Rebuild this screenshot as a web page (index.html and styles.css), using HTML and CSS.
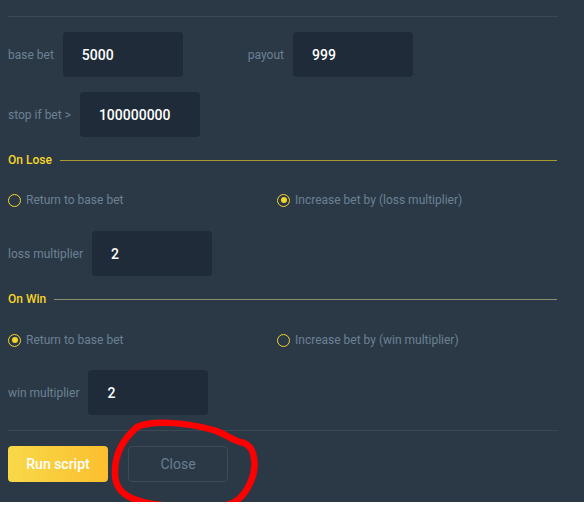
FILE: index.html
```html
<!DOCTYPE html>
<html lang="en">
<head>
    <meta charset="UTF-8">
    <meta name="viewport" content="width=device-width, initial-scale=1.0">
    <title>Auto Bet Script</title>
    <link rel="stylesheet" href="styles.css">
</head>
<body>
    <div class="panel">
        <div class="divider"></div>
        <div class="field-row first">
            <label class="field">
                <span class="field-label">base bet</span>
                <span class="field-input">5000</span>
            </label>
            <label class="field payout">
                <span class="field-label">payout</span>
                <span class="field-input">999</span>
            </label>
        </div>
        <div class="field-row">
            <label class="field">
                <span class="field-label">stop if bet &gt;</span>
                <span class="field-input">100000000</span>
            </label>
        </div>

        <div class="section-title lose"><span>On Lose</span></div>
        <div class="radio-row">
            <div class="radio"><span class="dot"></span>Return to base bet</div>
            <div class="radio"><span class="dot checked"></span>Increase bet by (loss multiplier)</div>
        </div>
        <div class="field-row mult">
            <label class="field">
                <span class="field-label">loss multiplier</span>
                <span class="field-input">2</span>
            </label>
        </div>

        <div class="section-title win"><span>On Win</span></div>
        <div class="radio-row">
            <div class="radio"><span class="dot checked"></span>Return to base bet</div>
            <div class="radio"><span class="dot"></span>Increase bet by (win multiplier)</div>
        </div>
        <div class="field-row mult">
            <label class="field">
                <span class="field-label">win multiplier</span>
                <span class="field-input">2</span>
            </label>
        </div>

        <div class="divider bottom"></div>
        <div class="actions">
            <button class="btn run">Run script</button>
            <button class="btn close">Close</button>
        </div>
    </div>

    <svg class="scribble" width="584" height="509" viewBox="0 0 584 509">
        <path d="M137 427 C150 421 182 421 213 430 C225 433 232 441 244 443 C257 448 256 470 251 481 C246 493 238 503 226 505 C200 508 160 507 140 501 C125 497 114 489 115 471 C115 456 121 441 137 427 Z"
              fill="none" stroke="#ff0000" stroke-width="6.5" stroke-linejoin="round"/>
    </svg>
</body>
</html>
```

FILE: styles.css
```css
body {
    margin: 0;
    background: #fff;
    font-family: Roboto, "Liberation Sans", sans-serif;
    position: relative;
}
.panel {
    width: 584px;
    height: 502px;
    box-sizing: border-box;
    background: #2b3947;
    padding: 16px 26px 0 8px;
}
.divider {
    height: 1px;
    background: #3b4957;
}
.divider.bottom {
    margin-top: 15px;
}
.field-row {
    display: flex;
    align-items: center;
    margin-top: 15px;
}
.field-row + .field-row {
    margin-top: 15px;
}
.field {
    display: flex;
    align-items: center;
    gap: 9px;
}
.field.payout {
    margin-left: 65px;
}
.field-label {
    font-size: 12px;
    color: #6b8193;
}
.field-input {
    width: 120px;
    height: 45px;
    box-sizing: border-box;
    padding-left: 19px;
    background: #1f2b38;
    border-radius: 4px;
    color: #fff;
    font-size: 14px;
    font-weight: 500;
    display: flex;
    align-items: center;
}
.section-title {
    display: flex;
    align-items: center;
    font-size: 12px;
    font-weight: 500;
    color: #f5d52a;
    height: 16px;
    margin-top: 15px;
}
.section-title::after {
    content: "";
    flex: 1;
    height: 1px;
    margin-left: 8px;
    margin-right: 1px;
}
.section-title.lose::after { background: #a8992c; }
.section-title.win::after { background: #8b8f70; }
.radio-row {
    display: grid;
    grid-template-columns: 269px 1fr;
    margin-top: 25px;
}
.section-title.win + .radio-row {
    margin-top: 26px;
}
.radio {
    display: flex;
    align-items: center;
    font-size: 12px;
    color: #6b8193;
    height: 14px;
}
.dot {
    width: 11px;
    height: 11px;
    border: 1.5px solid #f5d52a;
    border-radius: 50%;
    margin-right: 5px;
    position: relative;
    flex: none;
}
.dot.checked::after {
    content: "";
    position: absolute;
    left: 2.5px;
    top: 2.5px;
    width: 6px;
    height: 6px;
    border-radius: 50%;
    background: #f5d52a;
}
.field-row.mult {
    margin-top: 24px;
}
.section-title.win + .radio-row + .field-row.mult {
    margin-top: 23px;
}
.actions {
    display: flex;
    gap: 20px;
    margin-top: 15px;
}
.btn {
    width: 100px;
    height: 36px;
    border-radius: 4px;
    font-family: Roboto, "Liberation Sans", sans-serif;
    font-size: 14px;
    cursor: pointer;
}
.btn.run {
    border: none;
    background: linear-gradient(90deg, #f8d948, #fbbf2f);
    color: #fff;
    font-weight: 500;
}
.btn.close {
    background: transparent;
    border: 1px solid #3d4b59;
    color: #687e90;
}
.scribble {
    position: absolute;
    left: 0;
    top: 0;
    pointer-events: none;
}
```
